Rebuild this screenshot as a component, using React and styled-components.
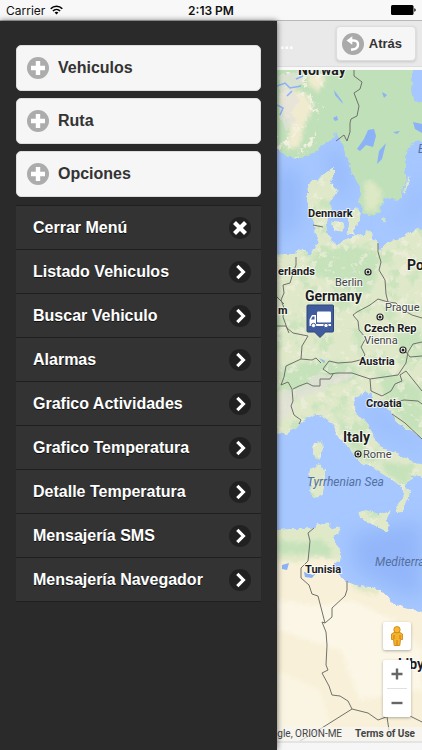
import React from "react";
import styled, { createGlobalStyle } from "styled-components";

const GlobalStyle = createGlobalStyle`
  * {
    box-sizing: border-box;
  }

  body {
    margin: 0;
    background: #f9f9f9;
    font-family: "Liberation Sans", Arial, sans-serif;
  }
`;

const Screen = styled.div`
  min-height: 100vh;
  display: flex;
  flex-direction: column;
`;

const StatusBar = styled.header`
  display: grid;
  grid-template-columns: 1fr auto 1fr;
  align-items: center;
  height: 21px;
  padding: 0 6px;
  background: #f8f8f8;
  border-bottom: 1px solid #b8b8b8;
  color: #111;
  font-family: Inter, "Liberation Sans", sans-serif;
  font-size: 12px;
`;

const Carrier = styled.span`
  display: flex;
  align-items: center;
  gap: 5px;
`;

const Clock = styled.time`
  font-weight: 600;
`;

const BatteryIcon = styled.svg`
  justify-self: end;
`;

const Body = styled.div`
  flex: 1;
  display: flex;
`;

const Panel = styled.nav`
  flex: 0 0 277px;
  padding: 24px 16px;
  background: #2a2a2a;
  box-shadow: 0 0 6px rgba(0, 0, 0, 0.6);
  z-index: 1;
`;

const Groups = styled.div`
  display: flex;
  flex-direction: column;
  gap: 7px;
  margin-bottom: 8px;
`;

const GroupButton = styled.button`
  display: flex;
  align-items: center;
  gap: 9px;
  width: 100%;
  height: 46px;
  padding: 0 10px;
  border: 1px solid #ddd;
  border-radius: 5px;
  background: #f6f6f6;
  color: #333;
  font-family: inherit;
  font-size: 16px;
  font-weight: bold;
  text-shadow: 0 1px 0 #f3f3f3;
  cursor: pointer;
`;

const MenuList = styled.ul`
  list-style: none;
  margin: 0;
  padding: 0;
  border-top: 1px solid #1f1f1f;
`;

const MenuItem = styled.li`
  border-bottom: 1px solid #1f1f1f;
`;

const MenuLink = styled.a`
  display: flex;
  align-items: center;
  justify-content: space-between;
  height: 43px;
  padding: 0 10px 0 17px;
  background: #333;
  color: #fff;
  font-size: 16px;
  font-weight: bold;
  text-decoration: none;
  text-shadow: 0 1px 0 #111;
`;

const Page = styled.main`
  flex: 1;
  min-width: 0;
  display: flex;
  flex-direction: column;
  background: #f9f9f9;
`;

const PageHeader = styled.header`
  display: flex;
  align-items: center;
  justify-content: space-between;
  height: 46px;
  padding: 0 6px 0 3px;
  background: #e9e9e9;
  border-bottom: 1px solid #ddd;
`;

const PageTitle = styled.h1`
  margin: 0;
  color: #fff;
  font-size: 16px;
`;

const BackButton = styled.button`
  display: flex;
  align-items: center;
  gap: 5px;
  height: 35px;
  padding: 0 13px 0 5px;
  border: 1px solid #ddd;
  border-radius: 4px;
  background: #f6f6f6;
  box-shadow: 0 1px 3px rgba(0, 0, 0, 0.15);
  color: #333;
  font-family: inherit;
  font-size: 13px;
  font-weight: bold;
  cursor: pointer;
`;

const MapView = styled.section`
  position: relative;
  flex: 1;
  margin-top: 3px;
  overflow: hidden;
  background: #a6c7ff;
`;

const MapDrawing = styled.svg`
  position: absolute;
  inset: 0;
  width: 100%;
  height: 100%;
  font-family: Roboto, sans-serif;
`;

const MapControls = styled.div`
  position: absolute;
  right: 11px;
  bottom: 24px;
  display: flex;
  flex-direction: column;
  gap: 10px;
`;

const ControlBox = styled.div`
  display: flex;
  flex-direction: column;
  align-items: center;
  width: 28px;
  border-radius: 2px;
  background: #fff;
  box-shadow: 0 1px 3px rgba(0, 0, 0, 0.3);
`;

const ControlButton = styled.button`
  display: flex;
  align-items: center;
  justify-content: center;
  width: 28px;
  height: 28px;
  padding: 0;
  border: 0;
  background: transparent;
  cursor: pointer;
`;

const Divider = styled.span`
  width: 20px;
  height: 1px;
  background: #e0e0e0;
`;

const Attribution = styled.div`
  position: absolute;
  right: 0;
  bottom: 0;
  left: 0;
  display: flex;
  justify-content: flex-end;
  gap: 13px;
  height: 14px;
  padding-right: 7px;
  background: rgba(245, 245, 245, 0.7);
  color: #444;
  font-family: Roboto, sans-serif;
  font-size: 10px;
  line-height: 14px;
  white-space: nowrap;
`;

const TermsLink = styled.a`
  color: #444;
  font-weight: bold;
  text-decoration: none;
`;

const PageFooter = styled.footer`
  height: 9px;
  border-top: 2px solid #e4e4e4;
  background: #f6f6f6;
`;

const groups = ["Vehiculos", "Ruta", "Opciones"];

const menuItems = [
  { label: "Cerrar Menú", icon: "close" },
  { label: "Listado Vehiculos", icon: "arrow" },
  { label: "Buscar Vehiculo", icon: "arrow" },
  { label: "Alarmas", icon: "arrow" },
  { label: "Grafico Actividades", icon: "arrow" },
  { label: "Grafico Temperatura", icon: "arrow" },
  { label: "Detalle Temperatura", icon: "arrow" },
  { label: "Mensajería SMS", icon: "arrow" },
  { label: "Mensajería Navegador", icon: "arrow" },
];

const places = [
  { name: "Norway", x: 298, y: 75, size: 14, bold: true },
  { name: "Denmark", x: 308, y: 217, size: 11, bold: true },
  { name: "erlands", x: 278, y: 275, size: 11, bold: true },
  { name: "Berlin", x: 335, y: 286, size: 11 },
  { name: "Germany", x: 305, y: 301, size: 14, bold: true },
  { name: "Po", x: 407, y: 270, size: 14, bold: true },
  { name: "m", x: 278, y: 314, size: 11, bold: true },
  { name: "Prague", x: 385, y: 311, size: 11 },
  { name: "Czech Rep", x: 364, y: 332, size: 11, bold: true },
  { name: "Vienna", x: 364, y: 344, size: 11 },
  { name: "Austria", x: 359, y: 365, size: 11, bold: true },
  { name: "Croatia", x: 366, y: 407, size: 11, bold: true },
  { name: "Italy", x: 343, y: 442, size: 14, bold: true },
  { name: "Rome", x: 363, y: 458, size: 11 },
  { name: "Tunisia", x: 305, y: 573, size: 11, bold: true },
  { name: "Libya", x: 398, y: 669, size: 14, bold: true },
];

const seas = [
  { name: "Tyrrhenian Sea", x: 307, y: 486 },
  { name: "Mediterranean", x: 375, y: 566 },
  { name: "B", x: 418, y: 153 },
];

const capitals = [
  [368, 272],
  [380, 317],
  [403, 350],
  [358, 454],
];

const scandinavia =
  "M270 60H412V84L411 96L415 101L422 102H430V139L416 142L408 147L407 158L405 168L407 180L403 188L402 198L397 200L384 198L382 205L379 214L372 216L364 214L361 207L358 201L361 195L358 184L352 173L349 163L345 155L343 145L339 138L336 132L332 139L324 144L316 151L306 157L296 159L287 157L280 151L270 146Z";

const land = [
  // Denmark and the continent
  "M334 168L334 177L331 183L338 190L334 197L330 204L332 213L326 222L327 232L331 241L337 244L343 240L351 237L357 234L365 235L366 230L371 231L372 238L378 243L380 251L385 244L399 238L415 230L430 226V442L416 434L407 430L397 423L392 414L386 406L382 401L376 400L370 404L371 395L366 391L361 395L355 397L354 405L358 416L366 420L371 430L376 441L385 449L398 454L410 460L430 467V480L414 475L409 482L405 484L410 491L409 500L404 506L402 512L396 513L396 506L401 500L404 494L400 486L392 480L382 474L374 468L364 465L354 456L349 447L343 443L336 434L334 425L325 418L316 414L303 421L296 428L286 434L270 433V255L285 254L295 254L296 249L306 250L308 256L313 252L315 245L319 242L315 231L313 222L309 213L307 201L307 190L310 181L319 179L324 173Z",
  // Danish islands
  "M331 222L341 221L346 227L342 232L334 230Z",
  "M346 213L356 207L362 213L360 222L354 227L355 236L346 233L349 224Z",
  "M383 217L387 220L386 224L381 221Z",
  "M411 175L405 194L403 192L408 178Z",
  // Corsica, Sardinia, Sicily
  "M322 437L323 449L320 460L315 458L312 448L314 443L321 442Z",
  "M311 468L319 464L325 470L325 480L323 494L313 499L310 492L311 478L308 474Z",
  "M358 512L366 510L379 514L391 510L387 519L389 525L387 532L377 527L360 518Z",
];

const africa =
  "M270 531L290 529L304 529L314 527L322 523L329 524L333 529L341 527L339 533L333 537L337 545L341 552L341 559L333 565L341 578L348 582L358 586L372 587L383 592L389 598L392 603L405 608L430 613V760H270Z";

const deepSea = [
  "M277 165L300 175L298 225L277 240Z",
  "M385 225L412 208L422 165V215Z",
  "M325 150L340 150L350 190L340 200Z",
  "M360 400L376 425L422 452V446L390 422L370 406Z",
  "M350 535L422 520V600L395 590L355 570Z",
];

const forests = [
  "M322 250L350 245L374 250L380 265L370 292L345 292L334 280L316 276L308 263Z",
  "M280 370L305 361L345 362L360 370L350 382L325 385L300 396L280 390Z",
  "M277 540L300 543L320 539L333 550L329 558L305 554L277 554Z",
  "M375 368L395 375L422 388L422 436L404 424L388 402Z",
  "M333 411L350 428L366 448L380 462L364 462L348 443Z",
  "M395 334L422 330L422 350L400 352Z",
  "M381 461L410 466L407 493L398 480L385 472Z",
];

const sands = [
  "M284 88L296 90L308 95L313 109L304 126L299 148L287 148L290 122L279 104Z",
  "M308 70L327 78L318 92L308 84Z",
];

const peaks = [
  "M279 75L300 71L304 82L293 91L300 101L290 113L297 121L286 130L280 119Z",
  "M277 402L283 389L296 391L294 410L284 419L277 420Z",
  "M296 389L306 384L317 374L330 376L345 372L358 374L340 383L326 385L322 391L308 395L297 401Z",
];

const lakes = [
  "M374 129L368 130L364 139L357 149L360 151L366 145L373 147L376 136Z",
  "M386 143L379 151L377 164L382 159Z",
  "M413 122L422 124L422 133L415 129Z",
  "M382 92L387 95L384 98Z",
  "M334 90L342 101L343 104L335 95Z",
  "M393 132L400 131L397 134Z",
  "M304 572L313 575L316 573L312 578L305 577Z",
  "M282 565L289 563L287 570L282 569Z",
  "M319 358L325 361L324 363Z",
  "M333 118L337 116L338 120L335 121Z",
];

const rivers = "M277 86L285 83L290 88L301 86M287 96L292 91M277 105L283 108L280 115M296 79L303 76";

const borders = [
  "M354 70L354 76L362 82L360 89L354 93L359 106L357 116L351 119L350 123L350 132L347 141L344 135L336 141",
  "M313 225L323 227",
  "M296 257L296 265L293 273L290 283L283 285L284 293L281 300L284 308L283 317L287 328L293 333L308 336L302 346L301 359L286 366L284 377L281 385",
  "M281 385L288 382L292 389L293 401L291 406L294 415L301 420L299 424",
  "M277 297L284 304M277 326L286 326L289 333",
  "M378 243L378 252L381 262L379 270L385 280L386 294L388 302L396 303L403 310L412 315L422 318",
  "M388 302L378 299L370 305L357 312L353 315L358 321L359 330L366 338L361 347L365 355L360 360L352 362L338 363L329 361L323 369L330 374L337 373L352 373L370 379L398 375L406 363L408 352L413 344L422 342",
  "M301 359L312 360L316 358L321 363M293 389L299 386L307 383L313 386L320 386L320 379L330 379L333 374",
  "M370 379L371 391L382 396L391 391L395 384L402 381L400 375L406 371L422 391M404 400L418 401L422 404M387 408L391 403L404 400M392 414L405 423L422 439",
  "M406 352L410 357L422 356",
  "M314 528L308 533L310 541L308 561L301 568L301 578L309 585L312 594L318 596L325 623L332 617L332 608L345 596L347 590L347 581",
  "M325 623L322 622L326 632L327 645L326 665L328 670L322 673L329 686L332 695L340 696L348 701L352 709L368 713L378 720L386 717M352 709L325 726L300 741M387 717L389 730M410 716L422 722",
];

function DiscIcon({ name, size = 22, disc }) {
  return (
    <svg width={size} height={size} viewBox="0 0 22 22" aria-hidden="true">
      <circle cx="11" cy="11" r="11" fill={disc} />
      {name === "plus" && <path d="M11 4V18M4 11H18" stroke="#fff" strokeWidth="4.4" fill="none" />}
      {name === "close" && <path d="M5.500 5.500L16.500 16.500M16.500 5.500L5.500 16.500" stroke="#fff" strokeWidth="4.2" fill="none" />}
      {name === "arrow" && <path d="M8.300 4.800L14.400 11L8.300 17.200" stroke="#fff" strokeWidth="3.2" fill="none" />}
      {name === "back" && (
        <>
          <path d="M4.500 7.500L10.300 3.300V11.700Z" fill="#fff" />
          <path d="M8 7.500H11.700C17.500 7.700 17.400 14.800 11.700 16.300L9 16.800" stroke="#fff" strokeWidth="2.4" fill="none" />
        </>
      )}
    </svg>
  );
}

function Truck() {
  return (
    <g>
      <path d="M308 305H332.500Q333.500 305 333.500 306V331Q333.500 332 332.500 332H325.500L320 337.500L314.500 332H308Q307 332 307 331V306Q307 305 308 305Z" fill="#405c9c" stroke="#2f467c" />
      <rect x="317" y="311.500" width="14" height="11" rx="1" fill="#fff" />
      <path d="M309.500 326V319.500L312 315H316V324H331V326Z" fill="#fff" />
      <path d="M311 319.500L312.700 316.500H314.500V319.500Z" fill="#405c9c" />
      <circle cx="313.500" cy="325.500" r="2.200" fill="#fff" stroke="#405c9c" />
      <circle cx="326" cy="325.500" r="2.200" fill="#fff" stroke="#405c9c" />
    </g>
  );
}

function EuropeMap() {
  return (
    <MapDrawing viewBox="277 70 145 671" preserveAspectRatio="xMinYMin slice" role="img" aria-label="Mapa">
      <defs>
        <filter id="soft">
          <feGaussianBlur stdDeviation="2" />
        </filter>
        <filter id="deep" x="-30%" y="-30%" width="160%" height="160%">
          <feGaussianBlur stdDeviation="10" />
        </filter>
        <filter id="rough" colorInterpolationFilters="sRGB">
          <feTurbulence type="fractalNoise" baseFrequency="0.2" numOctaves="2" seed="4" />
          <feDisplacementMap in="SourceGraphic" scale="5" xChannelSelector="R" yChannelSelector="G" />
        </filter>
        <filter id="woods" colorInterpolationFilters="sRGB">
          <feTurbulence type="fractalNoise" baseFrequency="0.06" numOctaves="3" seed="8" />
          <feColorMatrix values="0 0 0 0 0.78  0 0 0 0 0.89  0 0 0 0 0.73  6 0 0 0 -3.2" />
        </filter>
        <filter id="fields" colorInterpolationFilters="sRGB">
          <feTurbulence type="fractalNoise" baseFrequency="0.12" numOctaves="4" seed="21" />
          <feColorMatrix values="0 0 0 0 0.95  0 0 0 0 0.94  0 0 0 0 0.87  12 0 0 0 -7.2" />
        </filter>
        <clipPath id="continentClip">
          {land.map((d) => (
            <path key={d} d={d} />
          ))}
        </clipPath>
        <clipPath id="norwayClip">
          <path d="M277 70H330L325 90L322 120L316 151L296 159L277 150Z" />
        </clipPath>
        <clipPath id="landClip">
          <path d={scandinavia} />
          {land.map((d) => (
            <path key={d} d={d} />
          ))}
          <path d={africa} />
        </clipPath>
      </defs>

      <g filter="url(#deep)">
        {deepSea.map((d) => (
          <path key={d} d={d} fill="#92b6f9" />
        ))}
      </g>

      <g filter="url(#rough)">
        <g clipPath="url(#landClip)">
          <path d={scandinavia} fill="#bfe0b9" />
          {land.map((d) => (
            <path key={d} d={d} fill="#dfe9ca" />
          ))}
          <path d={africa} fill="#f8f0d8" />
          <g filter="url(#soft)">
            <path d="M270 525L345 520L345 562L320 556L300 562L270 560Z" fill="#dfe9c8" />
            {forests.map((d) => (
              <path key={d} d={d} fill="#c6e2bb" />
            ))}
            {sands.map((d) => (
              <path key={d} d={d} fill="#f0ebcf" />
            ))}
            <path d="M364 182L372 180L383 193L376 211L365 210Z" fill="#dde8c4" />
            <path d="M277 600L320 606L350 600L395 620L422 650V690L360 700L340 650L277 630Z" fill="#fbf6e6" />
            <path d="M277 670L320 690L335 740H277Z" fill="#faf5e2" />
            <path d="M350 582L380 590L376 594L356 590Z" fill="#dce6c0" />
          </g>
          <g clipPath="url(#continentClip)">
            <rect x="270" y="160" width="160" height="360" filter="url(#woods)" opacity="0.8" />
            <rect x="270" y="160" width="160" height="360" filter="url(#fields)" opacity="0.6" />
          </g>
          <g clipPath="url(#norwayClip)">
            <rect x="270" y="60" width="60" height="100" filter="url(#fields)" />
          </g>
          {peaks.map((d) => (
            <path key={d} d={d} fill="#e4e1da" opacity="0.7" />
          ))}
        </g>
      </g>

      {lakes.map((d) => (
        <path key={d} d={d} fill="#8bb1f6" />
      ))}
      <path d={rivers} fill="none" stroke="#8bb1f6" strokeWidth="1.500" />
      {borders.map((d) => (
        <path key={d} d={d} fill="none" stroke="#70726a" strokeWidth="1" strokeLinejoin="round" />
      ))}

      {capitals.map(([x, y]) => (
        <g key={y}>
          <circle cx={x} cy={y} r="3" fill="#fff" stroke="#222" strokeWidth="1.200" />
          <circle cx={x} cy={y} r="1.500" fill="#222" />
        </g>
      ))}
      {places.map((place) => (
        <text
          key={place.name}
          x={place.x}
          y={place.y}
          fontSize={place.size}
          fontWeight={place.bold ? 700 : 400}
          fill={place.bold ? "#1c1c1c" : "#444"}
          stroke="#fff"
          strokeWidth="2"
          strokeOpacity="0.7"
          paintOrder="stroke"
        >
          {place.name}
        </text>
      ))}
      {seas.map((sea) => (
        <text key={sea.name} x={sea.x} y={sea.y} fontSize="12" fontStyle="italic" fill="#55709f">
          {sea.name}
        </text>
      ))}
      <Truck />
    </MapDrawing>
  );
}

function Pegman() {
  return (
    <svg width="12" height="20" viewBox="0 0 12 20" aria-hidden="true">
      <path d="M3 6.500H9L11.500 8V13.500H9.500L8.800 19.500H3.200L2.500 13.500H0.500V8Z" fill="#f5b32b" stroke="#c97f13" strokeWidth="0.800" />
      <path d="M6 14V19.500M3 9V13M9 9V13" stroke="#b87415" strokeWidth="0.800" />
      <circle cx="6" cy="3.700" r="3.200" fill="#f8b830" stroke="#c97f13" strokeWidth="0.800" />
    </svg>
  );
}

function App() {
  return (
    <>
      <GlobalStyle />
      <Screen>
        <StatusBar>
          <Carrier>
            Carrier
            <svg width="13" height="10" viewBox="0 0 13 10" fill="none" stroke="#000" strokeWidth="1.600" aria-hidden="true">
              <path d="M0.700 3.800C3.900 0.400 9.100 0.400 12.300 3.800M2.900 6C5 3.900 8 3.900 10.100 6" />
              <path d="M4.600 7.400C5.800 6.400 7.200 6.400 8.400 7.400L6.500 9.500Z" fill="#000" stroke="none" />
            </svg>
          </Carrier>
          <Clock>2:13 PM</Clock>
          <BatteryIcon width="25" height="10" viewBox="0 0 25 10" aria-hidden="true">
            <rect width="22.500" height="10" rx="1.500" />
            <path d="M23.300 3.300C25.200 3.800 25.200 6.200 23.300 6.700Z" />
          </BatteryIcon>
        </StatusBar>
        <Body>
          <Panel>
            <Groups>
              {groups.map((label) => (
                <GroupButton key={label} type="button">
                  <DiscIcon name="plus" disc="#acacac" />
                  {label}
                </GroupButton>
              ))}
            </Groups>
            <MenuList>
              {menuItems.map((item) => (
                <MenuItem key={item.label}>
                  <MenuLink href="#">
                    {item.label}
                    <DiscIcon name={item.icon} disc="#212121" />
                  </MenuLink>
                </MenuItem>
              ))}
            </MenuList>
          </Panel>
          <Page>
            <PageHeader>
              <PageTitle>...</PageTitle>
              <BackButton type="button">
                <DiscIcon name="back" disc="#aaa" />
                Atrás
              </BackButton>
            </PageHeader>
            <MapView>
              <EuropeMap />
              <MapControls>
                <ControlBox>
                  <ControlButton type="button" aria-label="Street View">
                    <Pegman />
                  </ControlButton>
                </ControlBox>
                <ControlBox>
                  <ControlButton type="button" aria-label="Acercar">
                    <svg width="12" height="12" viewBox="0 0 12 12" stroke="#666" strokeWidth="2.400" aria-hidden="true">
                      <path d="M6 0.500V11.500M0.500 6H11.500" />
                    </svg>
                  </ControlButton>
                  <Divider />
                  <ControlButton type="button" aria-label="Alejar">
                    <svg width="12" height="12" viewBox="0 0 12 12" stroke="#666" strokeWidth="2.400" aria-hidden="true">
                      <path d="M0.500 6H11.500" />
                    </svg>
                  </ControlButton>
                </ControlBox>
              </MapControls>
              <Attribution>
                <span>Map data ©2015 Google, ORION-ME</span>
                <TermsLink href="#terms">Terms of Use</TermsLink>
              </Attribution>
            </MapView>
            <PageFooter />
          </Page>
        </Body>
      </Screen>
    </>
  );
}

export default App;
